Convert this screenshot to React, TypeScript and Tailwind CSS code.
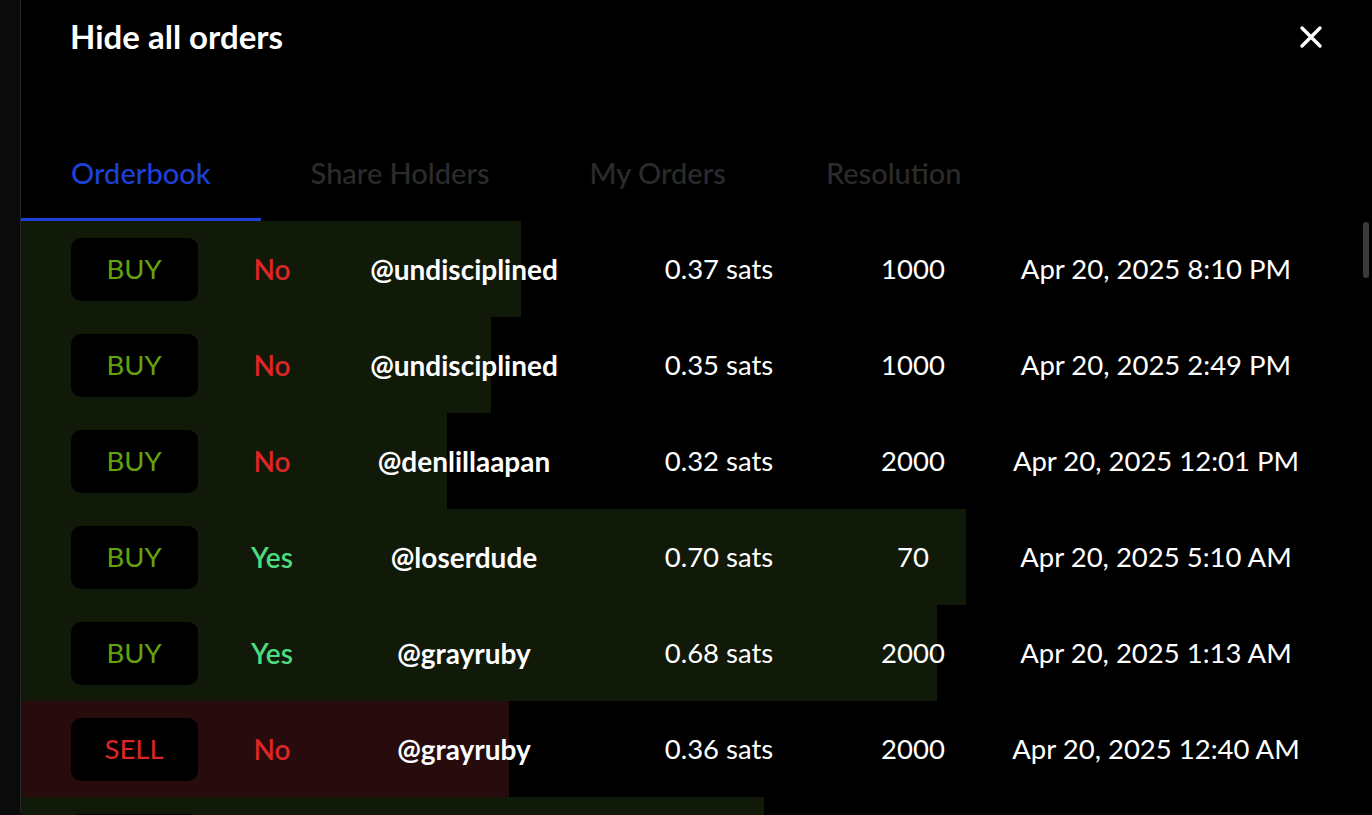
import React, { useState } from 'react';

type Order = {
  side: 'BUY' | 'SELL';
  outcome: 'Yes' | 'No';
  user: string;
  price: string;
  qty: string;
  date: string;
  depth: number;
};

const orders: Order[] = [
  { side: 'BUY', outcome: 'No', user: '@undisciplined', price: '0.37 sats', qty: '1000', date: 'Apr 20, 2025 8:10 PM', depth: 500 },
  { side: 'BUY', outcome: 'No', user: '@undisciplined', price: '0.35 sats', qty: '1000', date: 'Apr 20, 2025 2:49 PM', depth: 470 },
  { side: 'BUY', outcome: 'No', user: '@denlillaapan', price: '0.32 sats', qty: '2000', date: 'Apr 20, 2025 12:01 PM', depth: 426 },
  { side: 'BUY', outcome: 'Yes', user: '@loserdude', price: '0.70 sats', qty: '70', date: 'Apr 20, 2025 5:10 AM', depth: 945 },
  { side: 'BUY', outcome: 'Yes', user: '@grayruby', price: '0.68 sats', qty: '2000', date: 'Apr 20, 2025 1:13 AM', depth: 916 },
  { side: 'SELL', outcome: 'No', user: '@grayruby', price: '0.36 sats', qty: '2000', date: 'Apr 20, 2025 12:40 AM', depth: 488 },
  { side: 'BUY', outcome: 'Yes', user: '@grayruby', price: '0.66 sats', qty: '1500', date: 'Apr 19, 2025 11:52 PM', depth: 743 },
];

const tabs = ['Orderbook', 'Share Holders', 'My Orders', 'Resolution'];

const App = () => {
  const [active, setActive] = useState(0);

  return (
    <div className="h-[815px] w-full flex bg-[#0b0b0b] overflow-hidden font-['Lato','Noto_Sans',sans-serif]">
      <div className="w-[20px] shrink-0" />
      <div className="relative flex-1 flex flex-col bg-black border-l border-[#262626] rounded-bl-[4px] overflow-hidden">
        {/* header */}
        <div className="h-[76px] shrink-0 flex items-center justify-between pl-[49px] pr-[49px] pb-[3px]">
          <h1 className="text-[33px] font-bold text-white leading-none">Hide all orders</h1>
          <button className="text-white mt-[1px]" aria-label="Close">
            <svg width="24" height="24" viewBox="0 0 24 24" fill="none" stroke="currentColor" strokeWidth="3.4" strokeLinecap="round">
              <path d="M3 3 L21 21 M21 3 L3 21" />
            </svg>
          </button>
        </div>

        {/* tabs */}
        <div className="mt-[68px] flex shrink-0">
          {tabs.map((t, i) => (
            <button
              key={t}
              onClick={() => setActive(i)}
              className={`h-[77px] px-[50px] pt-[12px] flex items-start border-b-[3px] text-[29px] font-medium leading-[33px] ${
                active === i ? 'border-[#1d40d6] text-[#1d40d6]' : 'border-transparent text-[#2b2b2b]'
              }`}
            >
              {t}
            </button>
          ))}
        </div>

        {/* rows */}
        <div className="flex-1">
          {orders.map((o, i) => (
            <div key={i} className="relative h-[96px]">
              <div
                className={`absolute left-0 top-0 bottom-0 ${o.side === 'BUY' ? 'bg-[#111909]' : 'bg-[#280b0c]'}`}
                style={{ width: o.depth }}
              />
              <div className="relative h-full grid grid-cols-[226px_50px_334px_176px_212px_274px] items-center text-[27.5px] whitespace-nowrap">
                <div className="flex justify-center">
                  <span
                    className={`w-[127px] h-[63px] rounded-[10px] bg-black flex items-center justify-center ${
                      o.side === 'BUY' ? 'text-[#65a30d]' : 'text-[#dc2626]'
                    }`}
                  >
                    {o.side}
                  </span>
                </div>
                <div className={`flex justify-center text-[28px] font-semibold ${o.outcome === 'Yes' ? 'text-[#4ade80]' : 'text-[#dc2626]'}`}>
                  {o.outcome}
                </div>
                <div className="flex justify-center text-[28px] font-bold text-white">{o.user}</div>
                <div className="flex justify-center text-white">{o.price}</div>
                <div className="flex justify-center text-white">{o.qty}</div>
                <div className="flex justify-center text-white">{o.date}</div>
              </div>
            </div>
          ))}
        </div>

        {/* scrollbar thumb */}
        <div className="absolute right-[3px] top-[222px] w-[6px] h-[56px] rounded-full bg-[#3a3a3a]" />
      </div>
    </div>
  );
};

export default App;
